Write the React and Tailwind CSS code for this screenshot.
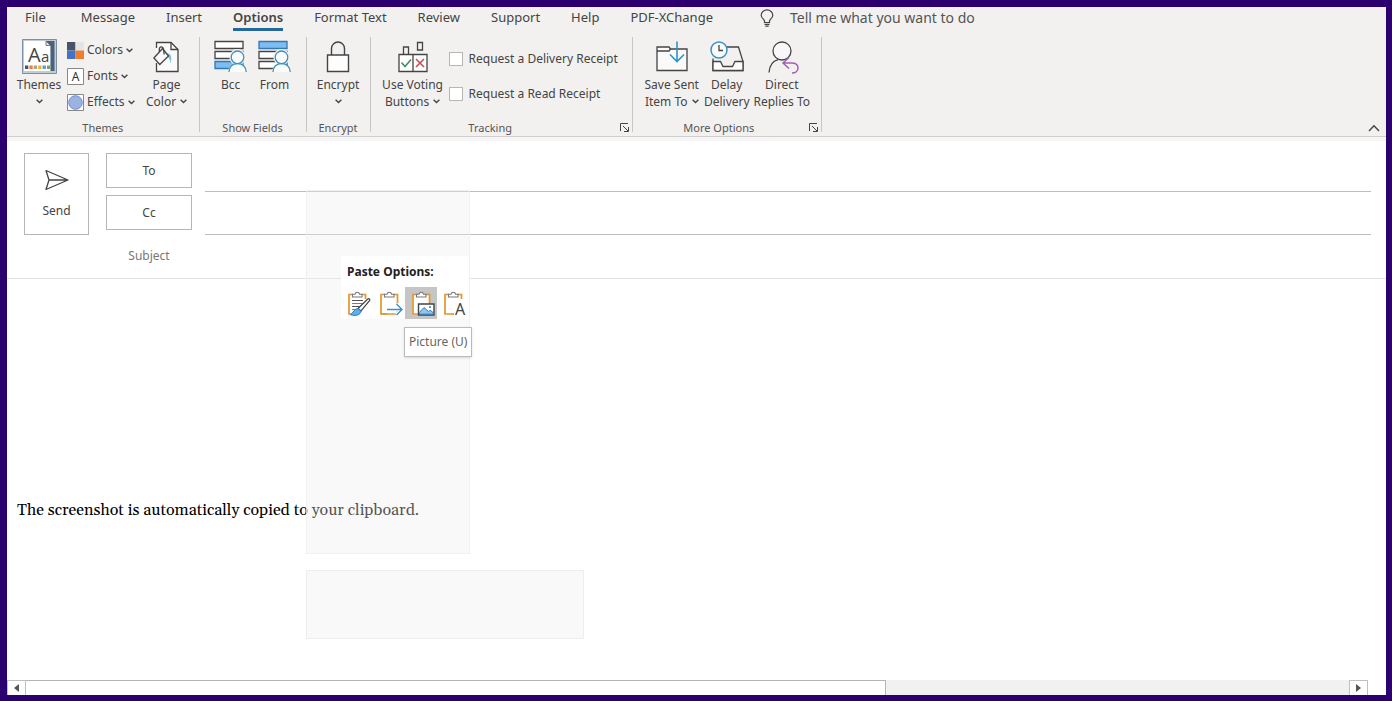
import { useState } from 'react';

const tabs = ['File', 'Message', 'Insert', 'Options', 'Format Text', 'Review', 'Support', 'Help', 'PDF-XChange'];

export default function App() {
     const [activeTab, setActiveTab] = useState('Options');

     return (
          <div className="flex min-h-screen flex-col bg-[#2c006f] pt-[7px] pr-[6px] pb-[6px] pl-[7px] font-['Noto_Sans','Open_Sans',sans-serif] text-[#444]">
               <div className="relative flex flex-1 flex-col bg-white">
                    {/* Ribbon */}
                    <header className="border-b border-[#d0cfce] bg-[#f3f1f0]">
                         <nav className="flex items-start gap-[31px] pl-[18px]">
                              {tabs.map((tab) => (
                                   <Tab key={tab} label={tab} active={tab === activeTab} onClick={() => setActiveTab(tab)} />
                              ))}
                              <button type="button" className="ml-4 flex h-[22px] items-center gap-4 text-sm text-[#555]">
                                   <BulbIcon />
                                   Tell me what you want to do
                              </button>
                         </nav>

                         <div className="flex items-end justify-between pt-[6px] pr-[6px]">
                              <div className="flex pb-1">
                                   <Group label="Themes" className="px-2">
                                        <BigButton icon={<ThemesIcon />} lines={['Themes']} chevron className="w-12" />
                                        <div className="flex flex-col pr-2 pl-1">
                                             <SmallButton icon={<ColorsIcon />} label="Colors" />
                                             <SmallButton icon={<FontsIcon />} label="Fonts" />
                                             <SmallButton icon={<EffectsIcon />} label="Effects" />
                                        </div>
                                        <BigButton icon={<PageColorIcon />} lines={['Page', 'Color']} chevron className="w-12" />
                                   </Group>
                                   <Group label="Show Fields" className="px-[9px]">
                                        <BigButton icon={<BccIcon />} lines={['Bcc']} className="w-11" />
                                        <BigButton icon={<FromIcon />} lines={['From']} className="w-11" />
                                   </Group>
                                   <Group label="Encrypt" className="px-2">
                                        <BigButton icon={<LockIcon />} lines={['Encrypt']} chevron className="w-[47px]" />
                                   </Group>
                                   <Group label="Tracking" className="pr-[14px] pl-2" launcher>
                                        <BigButton icon={<VotingIcon />} lines={['Use Voting', 'Buttons']} chevron className="w-[68px]" />
                                        <div className="flex flex-col gap-[13px] pt-[11px] pl-[2px]">
                                             <CheckRow label="Request a Delivery Receipt" />
                                             <CheckRow label="Request a Read Receipt" />
                                        </div>
                                   </Group>
                                   <Group label="More Options" className="px-[10px]" launcher>
                                        <BigButton icon={<SaveSentIcon />} lines={['Save Sent', 'Item To']} chevron className="w-[58px]" />
                                        <BigButton icon={<DelayIcon />} lines={['Delay', 'Delivery']} className="w-[52px]" />
                                        <BigButton icon={<DirectIcon />} lines={['Direct', 'Replies To']} className="w-[58px]" />
                                   </Group>
                              </div>
                              <button type="button" aria-label="Collapse the ribbon" className="pb-1">
                                   <svg width="12" height="8" viewBox="0 0 12 8" fill="none" stroke="#444" strokeWidth="1.4">
                                        <path d="M1 7l5-5.3L11 7" />
                                   </svg>
                              </button>
                         </div>
                    </header>
                    <div className="h-1 bg-[#f5f5f5]" />

                    {/* Address fields */}
                    <section className="flex border-b border-[#e3e3e3] pt-3 pr-[15px] pl-[17px]">
                         <button type="button" className="flex h-[82px] w-[65px] shrink-0 flex-col items-center justify-center gap-3 border border-[#b5b5b5] bg-white text-xs">
                              <SendIcon />
                              Send
                         </button>
                         <div className="ml-[17px] flex w-[86px] shrink-0 flex-col text-xs">
                              <button type="button" className="h-[35px] border border-[#b5b5b5] bg-white">To</button>
                              <button type="button" className="mt-[7px] h-[35px] border border-[#b5b5b5] bg-white">Cc</button>
                              <label htmlFor="subject" className="flex h-12 items-center justify-center pt-1 text-[#777]">Subject</label>
                         </div>
                         <div className="ml-[13px] flex flex-1 flex-col text-xs">
                              <input aria-label="To recipients" className="h-[39px] border-b border-[#bdbdbd] outline-none" />
                              <input aria-label="Cc recipients" className="h-[43px] border-b border-[#bdbdbd] outline-none" />
                              <input id="subject" className="h-[42px] outline-none" />
                         </div>
                    </section>

                    {/* Message body */}
                    <main className="flex flex-1 flex-col pt-[219px]">
                         <textarea
                              aria-label="Message body"
                              defaultValue="The screenshot is automatically copied to your clipboard."
                              className="flex-1 resize-none px-[10px] font-['Gelasio','Georgia','Liberation_Serif',serif] text-base leading-6 text-black outline-none"
                         />
                    </main>

                    <ScrollBar />

                    <PasteMenu />
               </div>
          </div>
     );
}

/* Ribbon parts */

function Tab({ label, active, onClick }) {
     return (
          <button
               type="button"
               onClick={onClick}
               className={`h-6 border-b-[3px] text-[13px] leading-[21px] first:mr-1 ${active ? 'border-[#22689b] font-semibold' : 'border-transparent'}`}
          >
               {label}
          </button>
     );
}

function Group({ label, className, launcher, children }) {
     return (
          <section className={`relative flex h-[95px] flex-col justify-between border-r border-[#c8c6c4] ${className}`}>
               <div className="flex items-start">{children}</div>
               <h2 className={`text-center text-[11px] leading-2 text-[#555] ${launcher ? 'pr-4' : ''}`}>{label}</h2>
               {launcher && (
                    <button type="button" aria-label={`${label} settings`} className="absolute right-[3px] bottom-0">
                         <svg width="9" height="9" viewBox="0 0 9 9" fill="none" stroke="#444">
                              <path d="M.5 8V.5H8M3 3l5 5M8.5 4v4.500H4" />
                         </svg>
                    </button>
               )}
          </section>
     );
}

function BigButton({ icon, lines, chevron, className }) {
     return (
          <button type="button" className={`flex flex-col items-center text-xs leading-[17px] whitespace-nowrap ${className}`}>
               <span className="flex h-[39px] items-center">{icon}</span>
               <span>{lines[0]}</span>
               <span className="flex h-[17px] items-center gap-1">
                    {lines[1]}
                    {chevron && <Chevron />}
               </span>
          </button>
     );
}

function SmallButton({ icon, label }) {
     return (
          <button type="button" className="flex h-[26px] items-center gap-[3px] text-xs">
               {icon}
               {label}
               <Chevron />
          </button>
     );
}

function CheckRow({ label }) {
     return (
          <label className="flex h-[22px] items-center gap-[6px] text-xs whitespace-nowrap">
               <input type="checkbox" className="h-[14px] w-[14px] appearance-none border border-[#b8b6b5] bg-white checked:bg-[#22689b]" />
               {label}
          </label>
     );
}

function Chevron() {
     return (
          <svg width="7" height="5" viewBox="0 0 7 5" fill="none" stroke="#444" strokeWidth="1.4">
               <path d="M.6.8l2.900 2.800L6.400.8" />
          </svg>
     );
}

/* Scroll bar */

function ScrollBar() {
     return (
          <div className="mr-[18px] flex h-[15px] bg-[#f1f1f1]">
               <button type="button" aria-label="Scroll left" className="flex w-[19px] items-center justify-center border border-b-0 border-[#c0c0c0] bg-white">
                    <svg width="5" height="8" viewBox="0 0 5 8" fill="#555"><path d="M5 0v8L0 4z" /></svg>
               </button>
               <div className="flex-1">
                    <div className="h-full w-[65%] border-t border-r border-[#b5b5b5] bg-white" />
               </div>
               <button type="button" aria-label="Scroll right" className="flex w-[19px] items-center justify-center border border-b-0 border-[#c0c0c0] bg-white">
                    <svg width="5" height="8" viewBox="0 0 5 8" fill="#555"><path d="M0 0v8l5-4z" /></svg>
               </button>
          </div>
     );
}

/* Context menu, faded except for the paste options */

function PasteMenu() {
     return (
          <>
               <div className="pointer-events-none absolute top-[183px] left-[299px] h-[364px] w-[164px] border border-[#eee]/70 bg-[#eee]/35" />
               <div className="pointer-events-none absolute top-[563px] left-[299px] h-[69px] w-[278px] border border-[#eee] bg-[#f9f9f9]" />
               <div className="absolute top-[249px] left-[334px] w-32 bg-white pt-[6px]">
                    <h3 className="pl-[6px] text-xs leading-5 font-bold text-[#222]">Paste Options:</h3>
                    <div className="mt-[5px] flex">
                         <PasteButton label="Keep Source Formatting"><ClipBrushIcon /></PasteButton>
                         <PasteButton label="Merge Formatting"><ClipArrowIcon /></PasteButton>
                         <PasteButton label="Picture" selected><ClipPictureIcon /></PasteButton>
                         <PasteButton label="Keep Text Only"><ClipTextIcon /></PasteButton>
                    </div>
               </div>
               <div role="tooltip" className="absolute top-[320px] left-[397px] border border-[#bbb] bg-white p-1 text-xs leading-5 whitespace-nowrap text-[#666] shadow-sm">
                    Picture (U)
               </div>
          </>
     );
}

function PasteButton({ label, selected, children }) {
     return (
          <button type="button" aria-label={label} className={`flex h-8 w-8 items-center justify-center pl-1 ${selected ? 'bg-[#c5c5c5]' : ''}`}>
               {children}
          </button>
     );
}

/* Icons */

function BulbIcon() {
     return (
          <svg width="14" height="18" viewBox="0 0 14 18" fill="none" stroke="#444" strokeWidth="1.2">
               <path d="M4.500 13.500V12C4.500 10.500 1.200 9.300 1.200 6.200a5.800 5.300 0 0 1 11.600 0C12.800 9.300 9.500 10.500 9.500 12v1.500zM4.500 15.300h5M5.300 17.200h3.400" />
          </svg>
     );
}

function ThemesIcon() {
     return (
          <svg width="35" height="35" viewBox="0 0 35 35">
               <path d="M.5.5h34v34H.5z" fill="#c3ccd6" stroke="#7d8fa3" />
               <path d="M2 2h22l4.500 4.500V32H2z" fill="#fff" />
               <path d="M24 2h8.500v30h-4V6.500z" fill="#4d6178" />
               <path d="M24 2v4.500h4.500z" fill="#dfe5ec" stroke="#4d6178" strokeWidth=".8" />
               <text x="6" y="23" fontSize="20" fontFamily="Open Sans, sans-serif" fill="#444">A</text>
               <text x="19" y="23" fontSize="15" fontFamily="Open Sans, sans-serif" fill="#444">a</text>
               <path d="M3 26.500h3.300v3.500H3z" fill="#44546a" />
               <path d="M7.400 26.500h3.300v3.500H7.400z" fill="#ed7d31" />
               <path d="M11.800 26.500h3.300v3.500h-3.300z" fill="#b0a090" />
               <path d="M16.200 26.500h3.300v3.500h-3.300z" fill="#f0b429" />
               <path d="M20.600 26.500h3.300v3.500h-3.300z" fill="#5b9bd5" />
               <path d="M25 26.500h3v3.500h-3z" fill="#70ad47" />
          </svg>
     );
}

function ColorsIcon() {
     return (
          <svg width="17" height="17" viewBox="0 0 17 17">
               <path d="M0 0h8.500v8.500H0z" fill="#44546a" />
               <path d="M8.500 0H17v8.500H8.500z" fill="#e4e4e4" />
               <path d="M0 8.500h8.500V17H0z" fill="#4472c4" />
               <path d="M8.500 8.500H17V17H8.500z" fill="#ed7d31" />
          </svg>
     );
}

function FontsIcon() {
     return (
          <svg width="17" height="17" viewBox="0 0 17 17">
               <path d="M.5.5h16v16H.5z" fill="#fff" stroke="#888" />
               <text x="8.500" y="13" fontSize="12" textAnchor="middle" fontFamily="Noto Sans, sans-serif" fill="#333">A</text>
          </svg>
     );
}

function EffectsIcon() {
     return (
          <svg width="17" height="17" viewBox="0 0 17 17">
               <path d="M.5.5h16v16H.5z" fill="#fff" stroke="#888" />
               <circle cx="8.500" cy="8.500" r="6.800" fill="#9db2e0" stroke="#6f8fd0" />
          </svg>
     );
}

function PageColorIcon() {
     return (
          <svg width="28" height="32" viewBox="0 0 28 32" fill="none" stroke="#444" strokeWidth="1.3">
               <path d="M3.500 7V1.500H18l7 7V30.500H3.500V22" fill="#fafafa" />
               <path d="M18 1.500v7h7" />
               <path d="M13 12c5 0 6.500 4 4.500 10.500-.5-4.500-1.200-5.500-3.500-7z" fill="#7cc0e4" stroke="none" />
               <path d="M.9 17l8.600-9.500 6 7.500-8.700 8.500z" fill="#f8f8f8" />
               <path d="M6.300 11V8.500c0-3.400 3.700-3.600 4.200-.5l.7 5.500" />
          </svg>
     );
}

function PersonOverlay() {
     return (
          <>
               <path d="M14 32c.4-6 4-8.500 9.300-8.500S31.800 26 32.200 32z" fill="#f3f1f0" stroke="none" />
               <circle cx="23.500" cy="17.300" r="6.200" fill="#fff" stroke="#f3f1f0" strokeWidth="4" />
               <path d="M15 32c.4-5.500 3.600-8.300 8.500-8.300s8.200 2.800 8.700 8.300" stroke="#3a93bf" fill="#f9fbfc" />
               <circle cx="23.500" cy="17.300" r="6.300" fill="#fafafa" stroke="#3a93bf" />
          </>
     );
}

function BccIcon() {
     return (
          <svg width="33" height="33" viewBox="0 0 33 33" fill="none" stroke="#444" strokeWidth="1.3">
               <path d="M1 1.500h28v7H1zM1 11.500h28v7H1z" fill="#fff" />
               <path d="M1 21.500h28v7H1z" fill="#7fbcf0" stroke="#3079b5" />
               <PersonOverlay />
          </svg>
     );
}

function FromIcon() {
     return (
          <svg width="33" height="33" viewBox="0 0 33 33" fill="none" stroke="#444" strokeWidth="1.3">
               <path d="M1 1.500h28v7H1z" fill="#7fbcf0" stroke="#3079b5" />
               <path d="M1 11.500h28v7H1zM1 21.500h28v7H1z" fill="#fff" />
               <PersonOverlay />
          </svg>
     );
}

function LockIcon() {
     return (
          <svg width="24" height="32" viewBox="0 0 24 32" fill="none" stroke="#444" strokeWidth="1.400">
               <path d="M5.500 14V7.500a6.500 6.500 0 0 1 13 0V14" />
               <path d="M1.500 14h21v16.500h-21z" fill="#fdfdfd" />
          </svg>
     );
}

function VotingIcon() {
     return (
          <svg width="30" height="32" viewBox="0 0 30 32" fill="none" stroke="#444" strokeWidth="1.300">
               <path d="M1 13.500h28v17H1z" fill="#fff" />
               <path d="M15 13.500v17M5.500 13.500V6h5v7.500M19.500 1.500h5V9h-5z" />
               <path d="M3.500 21.500l3.500 4 6-7" stroke="#3f8f68" strokeWidth="1.600" />
               <path d="M18 18l8 8M26 18l-8 8" stroke="#cf4a55" strokeWidth="1.600" />
          </svg>
     );
}

function SaveSentIcon() {
     return (
          <svg width="32" height="32" viewBox="0 0 32 32" fill="none" stroke="#444" strokeWidth="1.300">
               <path d="M1 29.500V6h12l1.500 2H31v21.500z" fill="#fafafa" />
               <path d="M1 10h12l1.500-2" />
               <path d="M21 .5v20M14 13.500l7 7 7-7" stroke="#2f94c4" strokeWidth="1.600" />
          </svg>
     );
}

function DelayIcon() {
     return (
          <svg width="34" height="32" viewBox="0 0 34 32" fill="none" stroke="#444" strokeWidth="1.300">
               <path d="M3 20.500v9h30v-9L28.500 6H15M3 20.500v-3" />
               <path d="M3 29.500v-9h7.500l2.500 5h9.500l2.500-5h8v9z" fill="#fdfdfd" />
               <circle cx="9" cy="9" r="8" fill="#fafafa" stroke="#3a93bf" strokeWidth="1.500" />
               <path d="M9 4v5.500h4" />
          </svg>
     );
}

function DirectIcon() {
     return (
          <svg width="34" height="34" viewBox="0 0 34 34" fill="none" stroke="#444" strokeWidth="1.300">
               <circle cx="17" cy="11" r="9" fill="#f8f8f8" />
               <path d="M4 32.500c.5-6.500 4-11.500 9-12.800" />
               <path d="M24 17.500l-6 5.500 6 5.500M18 23h8.500c4 0 6.500 2 6.500 5s-2.500 5-6 5" stroke="#a062b0" strokeWidth="1.500" />
          </svg>
     );
}

function SendIcon() {
     return (
          <svg width="26" height="22" viewBox="0 0 26 22" fill="none" stroke="#444" strokeWidth="1.300" strokeLinejoin="round">
               <path d="M2 1.500L24 11 2 20.500 5 11zM5 11h19" />
          </svg>
     );
}

function Clipboard() {
     return (
          <>
               <path d="M1.500 5h17v19.500h-17z" fill="#fff" stroke="none" />
               <path d="M6 4.500H2v19.500h6M14 4.500h4.500V9" stroke="#e0962f" strokeWidth="1.700" />
               <path d="M5.500 7V4.200H8a2.400 2.700 0 0 1 4.600 0H15V7z" fill="#fff" stroke="#777" strokeWidth="1.100" />
          </>
     );
}

function ClipBrushIcon() {
     return (
          <svg width="24" height="27" viewBox="0 0 24 27" fill="none">
               <Clipboard />
               <path d="M5 10.500h11M5 16.500h8" stroke="#555" />
               <path d="M5 13.500h11M5 19.500h4" stroke="#4d83cf" />
               <path d="M11 18.500L20.500 9.200c1.600-1.300 3 .2 1.800 1.700L14 21z" fill="#fff" stroke="#444" strokeWidth="1.200" />
               <path d="M11 18.500c-4 .2-4.500 4.200-7.500 6.200 5 1.700 10.300.3 10.500-3.700z" fill="#5eb0ea" stroke="#2b7cb8" />
          </svg>
     );
}

function ClipArrowIcon() {
     return (
          <svg width="24" height="27" viewBox="0 0 24 27" fill="none">
               <Clipboard />
               <path d="M2 24h16.500v-3M18.500 9v7" stroke="#e0962f" strokeWidth="1.700" />
               <path d="M8 19.500h14.500M17.500 14l5.500 5.500-5.500 5.500" stroke="#fff" strokeWidth="3.500" />
               <path d="M8 19.500h14.500M17.500 14l5.500 5.500-5.500 5.500" stroke="#3a8fc4" strokeWidth="1.400" />
          </svg>
     );
}

function ClipPictureIcon() {
     return (
          <svg width="24" height="27" viewBox="0 0 24 27" fill="none">
               <Clipboard />
               <path d="M18.500 9v5" stroke="#e0962f" strokeWidth="1.700" />
               <path d="M7.500 14h15.500v11H7.500z" fill="#fff" stroke="#444" strokeWidth="1.400" />
               <path d="M8.300 22.500l4.700-5 4.500 4.200 1.700-1.500 3 2.500v1.500H8.300z" fill="#8cc6f2" stroke="#2b7cb8" />
               <circle cx="19" cy="17" r="1" fill="#2b7cb8" />
          </svg>
     );
}

function ClipTextIcon() {
     return (
          <svg width="24" height="27" viewBox="0 0 24 27" fill="none" overflow="visible">
               <Clipboard />
               <path d="M8 24h3" stroke="#e0962f" strokeWidth="1.700" />
               <path d="M11 13h12v13H11z" fill="#fff" />
               <text x="12" y="25" fontSize="16" fontFamily="Noto Sans, sans-serif" fill="#444">A</text>
          </svg>
     );
}
